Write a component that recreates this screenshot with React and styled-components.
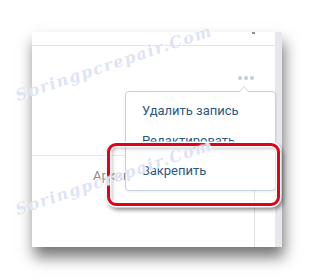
import styled, { createGlobalStyle } from "styled-components";

const GlobalStyle = createGlobalStyle`
  html, body {
    margin: 0;
    background: #ffffff;
  }
  body {
    font-family: Roboto, "Liberation Sans", sans-serif;
  }
`;

const Stage = styled.div`
  position: relative;
  width: 314px;
  height: 279px;
  padding: 32px 0 0 32px;
  box-sizing: border-box;
  overflow: hidden;
  background: #ffffff;
`;

const Panel = styled.div`
  display: flex;
  width: 250px;
  height: 215px;
  box-shadow: 2px 10px 14px rgba(0, 0, 0, 0.55);
`;

const Main = styled.div`
  flex: 1;
  display: flex;
  flex-direction: column;
  background: #ffffff;
`;

const Strip = styled.div`
  width: 7px;
  background: #e7e8ec;
`;

const TopBar = styled.div`
  position: relative;
  height: 13px;
  border-bottom: 1px solid #e1e3e6;
`;

const Mark = styled.span`
  position: absolute;
  left: 220px;
  top: 0;
  width: 3px;
  height: 2px;
  background: #8a8f96;
`;

const Body = styled.div`
  position: relative;
  flex: 1;
  display: flex;
  flex-direction: column;
`;

const PostHeader = styled.div`
  display: flex;
  justify-content: flex-end;
  height: 110px;
  padding: 30px 21px 0 0;
  box-sizing: border-box;
  border-bottom: 1px solid #e7e8ec;
`;

const Dots = styled.div`
  display: flex;
  gap: 2px;
  height: 4px;
`;

const Dot = styled.span`
  width: 4px;
  height: 4px;
  border-radius: 50%;
  background: #c3cbd4;
`;

const LowerRow = styled.div`
  flex: 1;
  display: flex;
`;

const LeftCell = styled.div`
  width: 223px;
  padding: 12px 0 0 61px;
  box-sizing: border-box;
  border-right: 1px solid #e1e3e6;
  font-size: 13px;
  line-height: 16px;
  color: #8c8c8c;
  white-space: nowrap;
  overflow: hidden;
`;

const Menu = styled.div`
  position: absolute;
  left: 93px;
  top: 45px;
  width: 151px;
  padding: 4px 0;
  box-sizing: border-box;
  background: #ffffff;
  border: 1px solid #c5d0db;
  border-radius: 4px;
  box-shadow: 0 1px 3px rgba(0, 0, 0, 0.08);
  z-index: 2;

  &::before,
  &::after {
    content: "";
    position: absolute;
    left: 113px;
    width: 0;
    height: 0;
    border: 5px solid transparent;
    border-top: 0;
  }
  &::before {
    top: -6px;
    border-bottom: 6px solid #c5d0db;
  }
  &::after {
    top: -5px;
    border-bottom: 6px solid #ffffff;
  }
`;

const MenuItem = styled.div`
  height: 30px;
  padding-left: 16px;
  font-size: 13px;
  line-height: 30px;
  color: #2a5885;
  white-space: nowrap;
`;

const Highlight = styled.div`
  position: absolute;
  left: 107px;
  top: 143px;
  width: 173px;
  height: 63px;
  box-sizing: border-box;
  border: 3px solid #e3001b;
  border-radius: 9px;
  box-shadow: 0 0 0 1.5px #ffffff, 2px 3px 4px 1px rgba(0, 0, 0, 0.45),
    inset 0 0 0 1.5px #ffffff, inset 2px 2px 4px rgba(0, 0, 0, 0.3);
  z-index: 3;
`;

const Watermark = styled.span`
  position: absolute;
  left: ${(p) => p.$x}px;
  top: ${(p) => p.$y}px;
  transform: translate(-50%, -50%) rotate(-18.6deg);
  font-family: "DejaVu Serif", "Liberation Serif", serif;
  font-style: italic;
  font-weight: bold;
  font-size: 16px;
  letter-spacing: 1.5px;
  color: rgba(190, 200, 236, 0.5);
  text-shadow: 0 0 1px #ffffff, 1px 1px 0 rgba(255, 255, 255, 0.8);
  white-space: nowrap;
  pointer-events: none;
  z-index: 4;
`;

export default function App() {
  return (
    <>
      <GlobalStyle />
      <Stage>
        <Panel>
          <Main>
            <TopBar>
              <Mark />
            </TopBar>
            <Body>
              <PostHeader>
                <Dots>
                  <Dot />
                  <Dot />
                  <Dot />
                </Dots>
              </PostHeader>
              <LowerRow>
                <LeftCell>Архивировать</LeftCell>
              </LowerRow>
              <Menu>
                <MenuItem>Удалить запись</MenuItem>
                <MenuItem>Редактировать</MenuItem>
                <MenuItem>Закрепить</MenuItem>
              </Menu>
            </Body>
          </Main>
          <Strip />
        </Panel>
        <Highlight />
        <Watermark $x={114} $y={63}>Soringpcrepair.Com</Watermark>
        <Watermark $x={114} $y={177}>Soringpcrepair.Com</Watermark>
      </Stage>
    </>
  );
}
